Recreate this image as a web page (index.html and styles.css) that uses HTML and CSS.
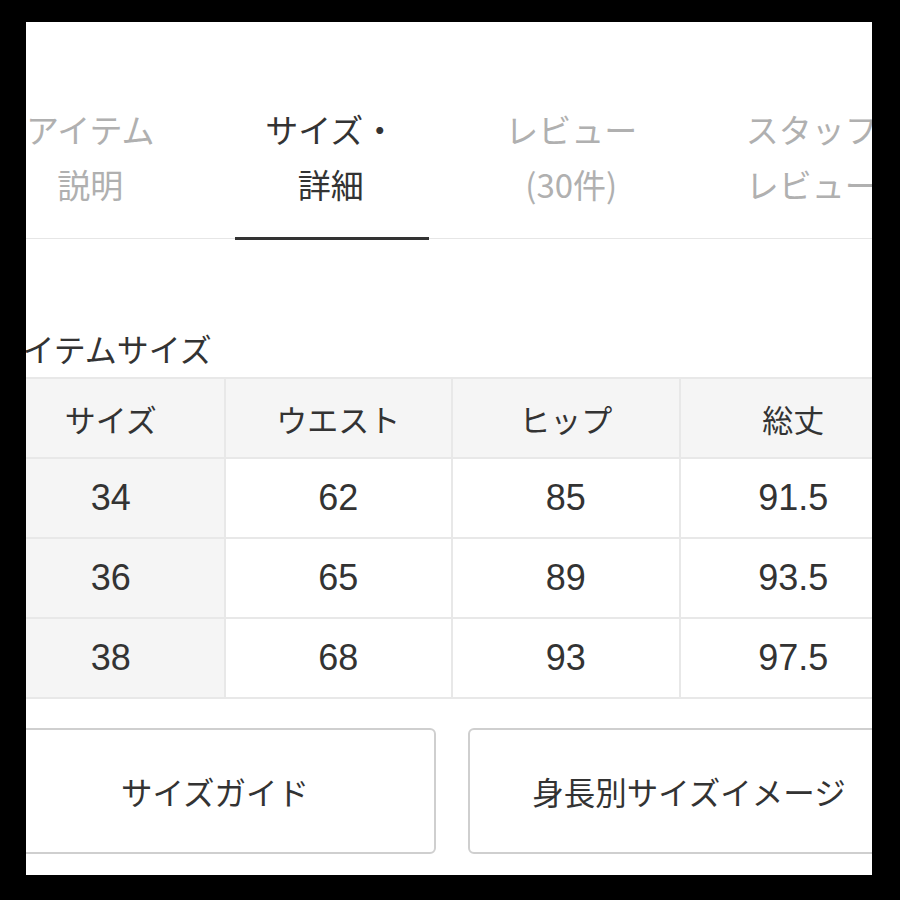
FILE: index.html
```html
<!DOCTYPE html>
<html lang="ja">
<head>
<meta charset="utf-8">
<title>サイズ・詳細</title>
<link rel="stylesheet" href="styles.css">
</head>
<body>
<div class="frame">
  <div class="inner">
    <nav class="tabs">
      <div class="tab"><span class="tab-label">アイテム<br>説明</span><span class="indicator"></span></div>
      <div class="tab active"><span class="tab-label">サイズ・<br>詳細</span><span class="indicator"></span></div>
      <div class="tab"><span class="tab-label">レビュー<br>(30件)</span><span class="indicator"></span></div>
      <div class="tab"><span class="tab-label">スタッフ<br>レビュー</span><span class="indicator"></span></div>
    </nav>

    <h2 class="section-title">アイテムサイズ</h2>

    <table class="size-table">
      <thead>
        <tr><th>サイズ</th><th>ウエスト</th><th>ヒップ</th><th>総丈</th></tr>
      </thead>
      <tbody>
        <tr><td class="size">34</td><td>62</td><td>85</td><td>91.5</td></tr>
        <tr><td class="size">36</td><td>65</td><td>89</td><td>93.5</td></tr>
        <tr><td class="size">38</td><td>68</td><td>93</td><td>97.5</td></tr>
      </tbody>
    </table>

    <div class="buttons">
      <button class="btn">サイズガイド</button>
      <button class="btn">身長別サイズイメージ</button>
    </div>
  </div>
</div>
</body>
</html>
```

FILE: styles.css
```css
html, body {
  margin: 0;
  padding: 0;
  background: #000;
}

body {
  padding: 22px 0 0 26px;
  font-family: "Noto Sans CJK JP", "Liberation Sans", sans-serif;
  color: #333;
}

.frame {
  width: 846px;
  height: 853px;
  background: #fff;
  overflow: hidden;
}

.inner {
  margin-left: -31px;
  width: 916px;
}

.tabs {
  display: flex;
  margin-left: -25px;
  width: 962px;
  padding-top: 80px;
  border-bottom: 1px solid #e6e6e6;
}

.tab {
  flex: none;
  width: 240.5px;
  display: flex;
  flex-direction: column;
  align-items: stretch;
  text-align: center;
}

.tab-label {
  font-size: 33px;
  line-height: 55px;
  color: #b0b0b0;
  padding-bottom: 25px;
}

.tab.active .tab-label {
  color: #333;
}

.indicator {
  height: 3px;
  margin: 0 22px -2px 24px;
  background: transparent;
}

.tab.active .indicator {
  background: #333;
}

.section-title {
  margin: 87px 0 0 -3px;
  font-size: 32px;
  line-height: 45px;
  font-weight: normal;
  color: #333;
}

.size-table {
  margin: 6px 0 0 1px;
  width: 912px;
  table-layout: fixed;
  border-collapse: collapse;
}

.size-table th,
.size-table td {
  border: 2px solid #e8e8e8;
  height: 78px;
  padding: 0;
  text-align: center;
  vertical-align: middle;
  color: #333;
}

.size-table th {
  background: #f5f5f5;
  font-weight: normal;
  font-size: 31px;
}

.size-table td {
  font-family: "Liberation Sans", "Noto Sans CJK JP", sans-serif;
  font-size: 36px;
  background: #fff;
}

.size-table td.size {
  background: #f5f5f5;
}

.buttons {
  display: flex;
  gap: 32px;
  margin: 29px 0 0 -1px;
}

.btn {
  flex: none;
  width: 442px;
  height: 126px;
  background: #fff;
  border: 2px solid #cfcfcf;
  border-radius: 6px;
  font-family: "Noto Sans CJK JP", "Liberation Sans", sans-serif;
  font-size: 31.5px;
  color: #333;
  padding: 0;
}
```
